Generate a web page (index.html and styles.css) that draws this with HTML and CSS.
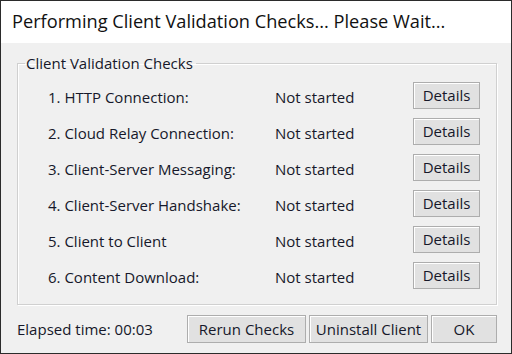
FILE: index.html
```html
<!DOCTYPE html>
<html lang="en">
<head>
    <meta charset="UTF-8">
    <title>Client Validation</title>
    <link rel="stylesheet" href="styles.css">
</head>
<body>
    <div class="window">
        <div class="title-bar">Performing Client Validation Checks... Please Wait...</div>

        <div class="content">
            <fieldset class="checks">
                <legend>Client Validation Checks</legend>

                <div class="check-row">
                    <span class="check-name">1. HTTP Connection:</span>
                    <span class="check-status">Not started</span>
                    <button class="btn details">Details</button>
                </div>
                <div class="check-row">
                    <span class="check-name">2. Cloud Relay Connection:</span>
                    <span class="check-status">Not started</span>
                    <button class="btn details">Details</button>
                </div>
                <div class="check-row">
                    <span class="check-name">3. Client-Server Messaging:</span>
                    <span class="check-status">Not started</span>
                    <button class="btn details">Details</button>
                </div>
                <div class="check-row">
                    <span class="check-name">4. Client-Server Handshake:</span>
                    <span class="check-status">Not started</span>
                    <button class="btn details">Details</button>
                </div>
                <div class="check-row">
                    <span class="check-name">5. Client to Client</span>
                    <span class="check-status">Not started</span>
                    <button class="btn details">Details</button>
                </div>
                <div class="check-row">
                    <span class="check-name">6. Content Download:</span>
                    <span class="check-status">Not started</span>
                    <button class="btn details">Details</button>
                </div>
            </fieldset>

            <div class="footer">
                <span class="elapsed">Elapsed time: 00:03</span>
                <div class="footer-buttons">
                    <button class="btn wide">Rerun Checks</button>
                    <button class="btn wide">Uninstall Client</button>
                    <button class="btn ok">OK</button>
                </div>
            </div>
        </div>
    </div>
</body>
</html>
```

FILE: styles.css
```css
* {
    box-sizing: border-box;
    margin: 0;
    padding: 0;
}

body {
    font-family: "Open Sans", "Noto Sans", sans-serif;
    color: #16182a;
    background: #f0f0f0;
}

.window {
    width: 512px;
    height: 354px;
    border: 1px solid #2b2b2b;
    background: #f0f0f0;
}

.title-bar {
    height: 42px;
    background: #fff;
    padding: 8px 0 0 11px;
    font-size: 18.2px;
    color: #111;
}

.content {
    padding: 10px 14px 0 16px;
}

.checks {
    border: 1px solid #d0d0d0;
    box-shadow: inset 1px 1px 0 #fff, 1px 1px 0 #fff;
    padding: 4px 14px 9px 30px;
    height: 252px;
}

.checks legend {
    margin-left: -23px;
    padding: 0 3px 0 1px;
    font-size: 15px;
}

.check-row {
    display: flex;
    align-items: center;
    height: 36px;
}

.check-name {
    width: 227px;
    font-size: 15px;
    padding-top: 4px;
}

.check-status {
    width: 138px;
    font-size: 15px;
    padding-top: 4px;
}

.btn {
    font-family: inherit;
    font-size: 15px;
    color: #16182a;
    background: #e1e1e1;
    border: 1px solid #adadad;
    box-shadow: inset 1px 1px 0 #fff;
    height: 27px;
}

.details {
    width: 67px;
}

.footer {
    display: flex;
    align-items: center;
    justify-content: space-between;
    margin-top: 10px;
}

.elapsed {
    font-size: 15px;
}

.footer-buttons {
    display: flex;
    gap: 3px;
}

.footer-buttons .btn {
    height: 28px;
}

.wide {
    width: 119px;
}

.ok {
    width: 66px;
}
```
